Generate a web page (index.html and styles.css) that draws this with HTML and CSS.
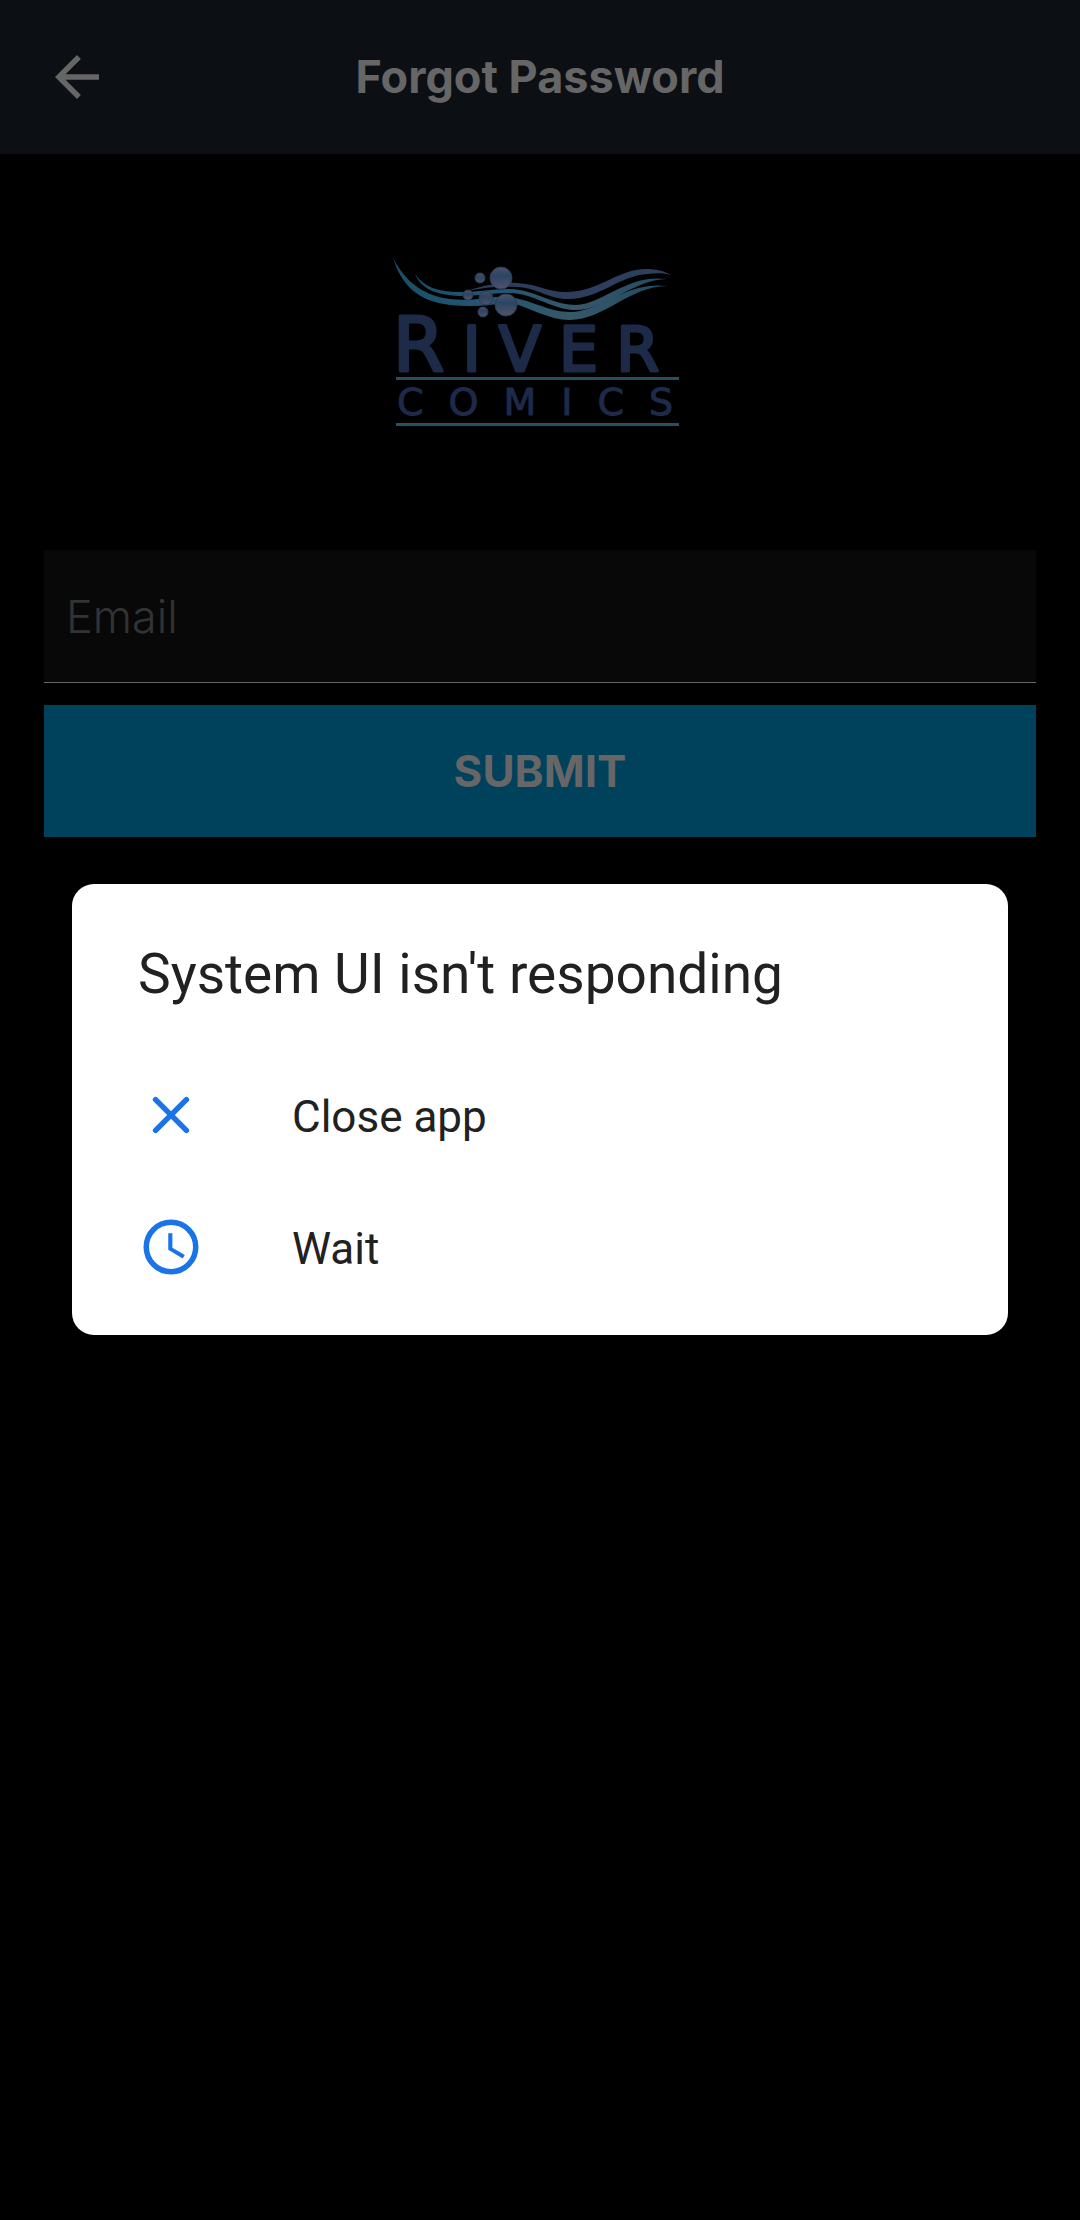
FILE: index.html
```html
<!DOCTYPE html>
<html lang="en">
<head>
<meta charset="utf-8">
<meta name="viewport" content="width=device-width, initial-scale=1">
<title>Forgot Password</title>
<link rel="stylesheet" href="styles.css">
</head>
<body>
<header class="app-bar">
  <button class="back" type="button" aria-label="Back">
    <svg class="icon" viewBox="0 0 24 24" fill="currentColor" aria-hidden="true"><path d="M20 11H7.83l5.59-5.59L12 4l-8 8 8 8 1.41-1.41L7.83 13H20z"/></svg>
  </button>
  <h1 class="app-title">Forgot Password</h1>
</header>

<main class="content">
  <svg class="logo" viewBox="390 250 300 180" role="img" aria-label="River Comics">
    <defs>
      <linearGradient id="teal" x1="0" x2="1"><stop offset="0" stop-color="#1a4f68"/><stop offset=".3" stop-color="#215572"/><stop offset=".65" stop-color="#37576a"/><stop offset="1" stop-color="#214b61"/></linearGradient>
      <linearGradient id="slate" x1="0" x2="1"><stop offset="0" stop-color="#2c3c5a"/><stop offset="1" stop-color="#2d405e"/></linearGradient>
      <linearGradient id="bubble" x1="0" y1="0" x2="0" y2="1"><stop offset="0" stop-color="#4a546c"/><stop offset=".4" stop-color="#2b4562"/><stop offset="1" stop-color="#50546c"/></linearGradient>
    </defs>
    <path fill="url(#teal)" d="M393 258C406 283 425 296 450 299C475 302 488 295 508 297C530 299 548 312 570 312C600 312 625 281 667 286C630 286 604 320 570 320C548 320 530 307 508 302C490 306 470 307 450 305C418 301 402 286 393 258Z"/>
    <path fill="url(#teal)" d="M415 274C424 287 438 292 460 292C486 292 500 287 520 290C540 294 556 305 576 305C603 304 627 274 667 279C632 280 606 310 576 310C556 310 542 299 520 294C500 291 484 296 460 296C434 295 421 288 415 274Z"/>
    <path fill="url(#slate)" d="M467 291C485 285 500 282 517 283C538 284 550 293 568 292C600 291 618 269 646 269C656 269 664 271 671 275C664 273 656 273 648 274C620 275 600 299 568 299C548 299 538 288 517 287C500 286 485 287 467 291Z"/>
    <g fill="url(#bubble)" stroke="#303954" stroke-width="1">
      <circle cx="501" cy="278" r="11"/><circle cx="506" cy="305" r="11"/><circle cx="486" cy="298" r="7"/><circle cx="468" cy="295" r="5"/><circle cx="480" cy="278" r="5"/><circle cx="483" cy="312" r="5"/>
    </g>
    <text class="logo-name" x="393" y="371"><tspan class="logo-initial">R</tspan>IVER</text>
    <path stroke="#284f62" stroke-width="3" d="M396 378.500H679M396 424.500H679"/>
    <text class="logo-sub" x="397" y="415">COMICS</text>
  </svg>

  <form class="form">
    <input class="field" type="email" placeholder="Email" aria-label="Email">
    <button class="submit" type="submit">SUBMIT</button>
  </form>
</main>

<div class="overlay">
  <section class="dialog" role="alertdialog" aria-labelledby="dialog-title">
    <h2 class="dialog-title" id="dialog-title">System UI isn't responding</h2>
    <button class="action" type="button">
      <svg class="icon" viewBox="0 0 24 24" fill="none" stroke="currentColor" stroke-width="2" stroke-linecap="round" aria-hidden="true"><path d="M6.400 6.400 17.600 17.600M17.600 6.400 6.400 17.600"/></svg>
      <span class="action-label">Close app</span>
    </button>
    <button class="action" type="button">
      <svg class="icon" viewBox="0 0 24 24" aria-hidden="true"><circle cx="12" cy="12" r="9" fill="none" stroke="currentColor" stroke-width="2"/><path fill="currentColor" d="M12.500 7H11v6l5.250 3.150.75-1.230-4.500-2.670z"/></svg>
      <span class="action-label">Wait</span>
    </button>
  </section>
</div>
</body>
</html>
```
FILE: styles.css
```css
* {
  box-sizing: border-box;
}

body {
  margin: 0;
  min-height: 100vh;
  background: #000;
  color: #666;
  font-family: Inter, "Liberation Sans", sans-serif;
}

button {
  border: 0;
  padding: 0;
  background: none;
  color: inherit;
  font: inherit;
}

.icon {
  display: block;
  width: 66px;
  height: 66px;
}

.app-bar {
  display: grid;
  grid-template-columns: 66px 1fr 66px;
  align-items: center;
  padding: 44px;
  background: #0c1014;
}

.app-title {
  margin: 0;
  font-size: 45px;
  line-height: 66px;
  font-weight: 700;
  text-align: center;
}

.content {
  padding: 96px 44px 44px;
}

.logo {
  display: block;
  width: 300px;
  height: 180px;
  margin: 0 auto 120px;
  overflow: visible;
}

.logo text {
  font-family: "DejaVu Sans", sans-serif;
  fill: #1d2b49;
  stroke: #1d2b49;
  stroke-linejoin: round;
}

.logo-name {
  font-size: 62px;
  letter-spacing: 18px;
  stroke-width: 3px;
}

.logo-initial {
  font-size: 74px;
}

.logo-sub {
  font-size: 38px;
  letter-spacing: 25px;
  stroke-width: 1px;
}

.form {
  display: flex;
  flex-direction: column;
  gap: 22px;
}

.field {
  width: 100%;
  height: 133px;
  padding: 0 22px;
  border: 0;
  border-bottom: 1px solid #666;
  border-radius: 0;
  outline: 0;
  background: #080808;
  color: #666;
  font: 300 45px Inter, "Liberation Sans", sans-serif;
}

.field::placeholder {
  color: #333;
  opacity: 1;
}

.submit {
  height: 132px;
  background: #00415c;
  font-size: 44px;
  font-weight: 700;
}

.overlay {
  position: fixed;
  inset: 0;
  display: flex;
  align-items: center;
  justify-content: center;
  padding: 72px 72px 73px;
}

.dialog {
  width: 100%;
  padding: 58px 0 22px;
  border-radius: 22px;
  background: #fff;
  color: #212121;
  font-family: Roboto, sans-serif;
}

.dialog-title {
  margin: 0 66px 43px;
  font-size: 55px;
  line-height: 64px;
  font-weight: 400;
}

.action {
  display: flex;
  align-items: center;
  gap: 88px;
  width: 100%;
  height: 132px;
  padding: 0 66px;
  font-size: 44px;
  text-align: left;
}

.action .icon {
  color: #1a73e8;
}

.action-label {
  padding-top: 3px;
}
```
